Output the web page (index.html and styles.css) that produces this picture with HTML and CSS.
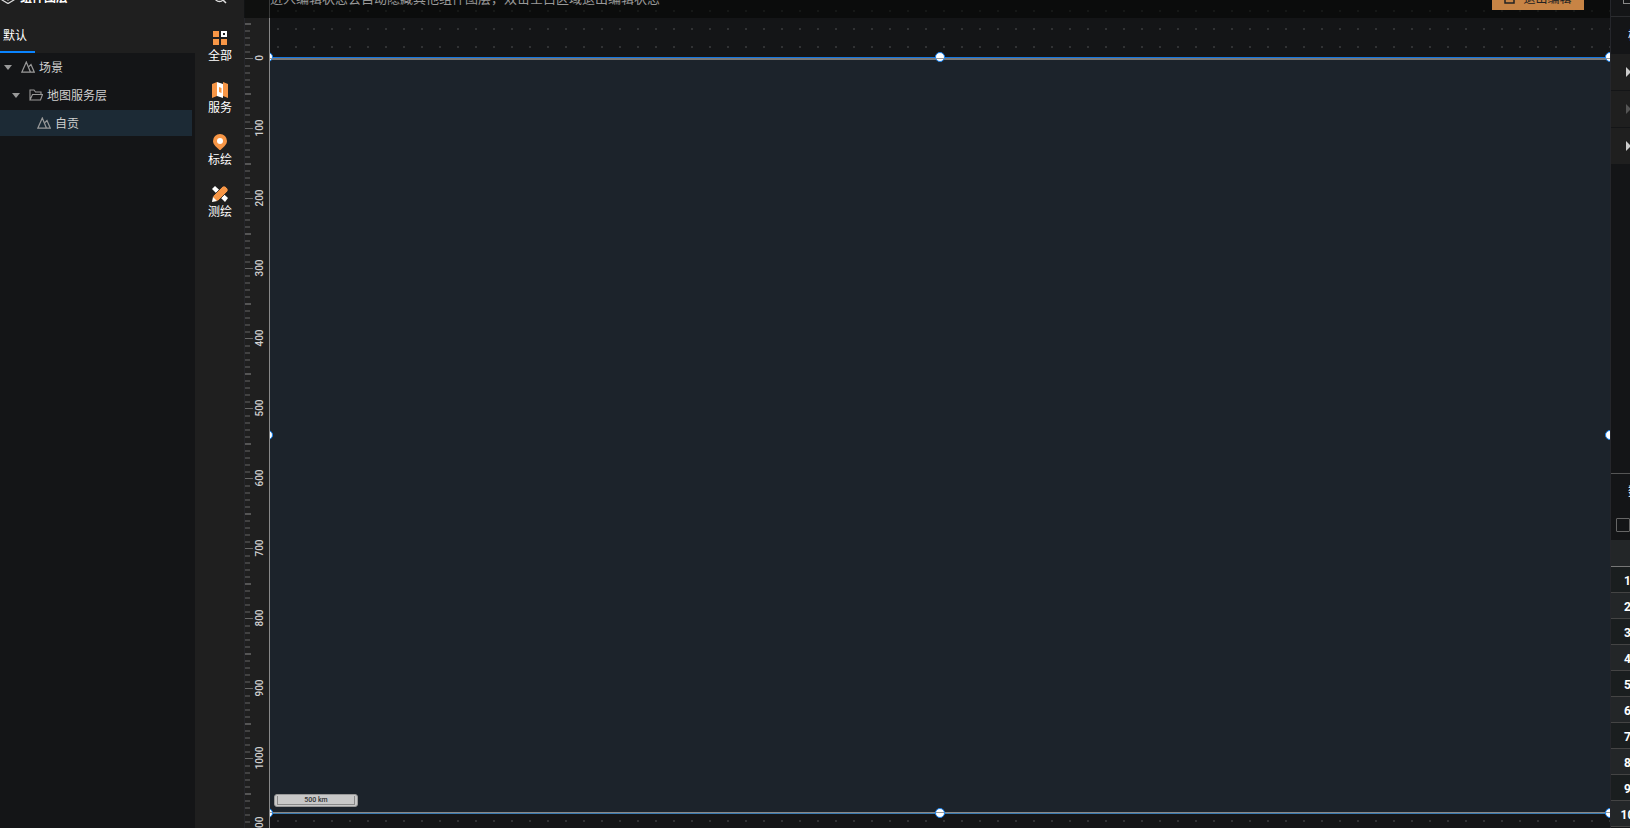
FILE: index.html
```html
<!DOCTYPE html>
<html lang="zh-CN">
<head>
    <meta charset="utf-8">
    <title>组件图层</title>
    <link rel="stylesheet" href="styles.css">
</head>
<body>
    <!-- shared icons -->
    <svg class="sprite" aria-hidden="true">
        <symbol id="icon-scene" viewBox="0 0 14 12">
            <path d="M.8 11.200 5.300 1l4.200 10.200zM8 5.500l2-2 3.300 7.700H9.500" fill="none" stroke="#999" stroke-width="1.200"/>
        </symbol>
        <symbol id="icon-folder" viewBox="0 0 14 12">
            <path d="M1 11V1h4l1.500 2H12v2.500M1 11l2.500-5.500H13.500L11.500 11z" fill="none" stroke="#999" stroke-width="1.100"/>
        </symbol>
    </svg>

    <div class="editor">
        <aside class="layers">
            <header class="layers-header">
                <div class="layers-title">
                    <svg width="14" height="14" viewBox="0 0 14 14"><path d="M1 8v2l6 3.500 6-3.500V8M1 6l6 4 6-4-6-4z" fill="none" stroke="#ddd" stroke-width="1.300"/></svg>
                    <h1>组件图层</h1>
                </div>
                <button type="button" class="tab">默认</button>
            </header>
            <ul class="tree">
                <li class="node"><i class="caret"></i><svg class="node-icon"><use href="#icon-scene"/></svg>场景</li>
                <li class="node level-1"><i class="caret"></i><svg class="node-icon"><use href="#icon-folder"/></svg>地图服务层</li>
                <li class="node level-2 selected"><svg class="node-icon"><use href="#icon-scene"/></svg>自贡</li>
            </ul>
        </aside>

        <nav class="tools">
            <button type="button" class="search" aria-label="搜索">
                <svg width="14" height="14" viewBox="0 0 14 14"><circle cx="6.500" cy="6.500" r="5" fill="none" stroke="#ddd" stroke-width="1.300"/><path d="m10 10 3 3" stroke="#ddd" stroke-width="1.500"/></svg>
            </button>
            <button type="button" class="tool">
                <svg viewBox="0 0 16 16"><path d="M1 1h6v6H1zM1 9h6v6H1zM9 9h6v6H9z" fill="#f79646"/><path d="M10 2h4v4h-4z" fill="none" stroke="#fff" stroke-width="2"/></svg>
                全部
            </button>
            <button type="button" class="tool">
                <svg viewBox="0 0 16 16"><path d="M0 2 5 0v14L0 16zM11 0l5 2v14l-5-2z" fill="#f79646"/><path d="m5 0 6 2v14l-6-2z" fill="#fff"/><path d="m7 5 2.500 1v5L7 10z" fill="#f79646"/></svg>
                服务
            </button>
            <button type="button" class="tool">
                <svg viewBox="0 0 16 16"><path d="M8 0a7 7 0 0 1 7 7c0 4-4.500 7-7 9.500C5.500 14 1 11 1 7a7 7 0 0 1 7-7z" fill="#f79646"/><circle cx="8" cy="7" r="3" fill="#fff"/></svg>
                标绘
            </button>
            <button type="button" class="tool">
                <svg viewBox="0 0 16 16"><path d="m0 3 3-3 13 12-3 4z" fill="#fff"/><path d="M11 0h2l3 3v2L6 15l-6 1 1-6z" fill="#f79646" stroke="#1f1f1f" stroke-width=".8"/><path d="m1 11 4 4-5 1z" fill="#fff"/></svg>
                测绘
            </button>
        </nav>

        <main class="stage">
            <div class="notice">
                <p>进入编辑状态会自动隐藏其他组件图层，双击空白区域退出编辑状态</p>
                <button type="button" class="exit">
                    <svg width="12" height="12" viewBox="0 0 12 12"><path d="M7 1H1v10h9V6M6 6l5-5" fill="none" stroke="#222" stroke-width="1.500"/></svg>
                    退出编辑
                </button>
            </div>
            <div class="ruler" id="ruler"></div>
            <div class="canvas">
                <div class="map">
                    <div class="scale"><span>500 km</span></div>
                    <i class="handle top left"></i>
                    <i class="handle top center"></i>
                    <i class="handle top right"></i>
                    <i class="handle middle left"></i>
                    <i class="handle middle right"></i>
                    <i class="handle bottom left"></i>
                    <i class="handle bottom center"></i>
                    <i class="handle bottom right"></i>
                </div>
            </div>
        </main>

        <aside class="props">
            <div class="props-top"><i class="box"></i></div>
            <h2 class="props-title">样式</h2>
            <div class="group"><i class="arrow"></i></div>
            <div class="group"><i class="arrow dim"></i></div>
            <div class="group"><i class="arrow"></i></div>
            <div class="props-fill"></div>
            <h2 class="data-title">数据</h2>
            <div class="data-check"><input type="checkbox" aria-label="全选"></div>
            <table class="data">
                <thead><tr><th></th></tr></thead>
                <tbody id="rows"></tbody>
            </table>
        </aside>
    </div>

    <script src="script.js"></script>
</body>
</html>
```
FILE: styles.css
```css
* {
    box-sizing: border-box;
}

body {
    margin: 0;
    background-color: #141517;
    color: #d0d0d0;
    font: 12px/16px "Noto Sans CJK SC", sans-serif;
}

button {
    padding: 0;
    border: none;
    background: none;
    color: #fff;
    font: inherit;
    cursor: pointer;
}

.sprite {
    display: none;
}

.editor {
    display: grid;
    grid-template-columns: 195px 49px minmax(0, 1fr) 20px;
    height: 100vh;
    overflow: hidden;
}

/* layer tree */
.layers-header {
    height: 53px;
    background-color: #1f1f1f;
    overflow: hidden;
}

.layers-title {
    display: flex;
    align-items: center;
    gap: 5px;
    height: 16px;
    margin-top: -11px;
    padding-left: 1px;
}

.layers-title h1 {
    margin: 0;
    font-size: 12px;
    font-weight: bold;
    color: #fff;
}

.tab {
    display: block;
    width: 35px;
    height: 34px;
    margin-top: 14px;
    padding-left: 3px;
    border-bottom: 2px solid #0a84ff;
    text-align: left;
}

.tree {
    margin: 0;
    padding: 1px 3px 0 0;
    list-style: none;
}

.node {
    display: flex;
    align-items: center;
    height: 26px;
    margin-bottom: 2px;
    padding-left: 4px;
}

.level-1 {
    padding-left: 12px;
}

.level-2 {
    padding-left: 37px;
}

.selected {
    background-color: #1c2a35;
}

.caret {
    margin-right: 9px;
    border: 4px solid transparent;
    border-top: 5px solid #999;
    border-bottom: none;
}

.node-icon {
    width: 14px;
    height: 12px;
    margin-right: 4px;
}

/* tool bar */
.tools {
    display: flex;
    flex-direction: column;
    align-items: center;
    padding-left: 1px;
    background-color: #1f1f1f;
}

.search {
    height: 14px;
    margin: -10px 0 26px;
}

.search svg {
    display: block;
}

.tool {
    display: flex;
    flex-direction: column;
    align-items: center;
    height: 52px;
}

.tool svg {
    width: 16px;
    height: 16px;
    margin-bottom: 1px;
}

/* stage */
.stage {
    position: relative;
    display: grid;
    grid-template-columns: 26px minmax(0, 1fr);
    height: 100vh;
    overflow: hidden;
}

.notice {
    position: absolute;
    z-index: 2;
    top: 0;
    left: 0;
    right: 0;
    display: flex;
    justify-content: space-between;
    height: 18px;
    padding: 0 26px;
    background-color: rgba(5, 7, 5, 0.6);
    color: #999;
}

.notice p {
    margin: -10px 0 0;
    font-size: 13px;
    white-space: nowrap;
}

.exit {
    display: flex;
    align-items: center;
    justify-content: center;
    gap: 7px;
    width: 92px;
    height: 30px;
    margin-top: -20px;
    padding-top: 6px;
    background-color: #c78445;
    color: #222;
}

.ruler {
    height: 100vh;
    padding-top: 23px;
    background-color: #1f1f1f;
    border-left: 1px solid #25262b;
    border-right: 1px solid #888;
    overflow: hidden;
}

.mark {
    position: relative;
    height: 7px;
}

.mark::before {
    content: "";
    display: block;
    width: 5px;
    height: 2px;
    background-color: #424242;
}

.mark.half::before {
    width: 6px;
    background-color: #555;
}

.mark.full::before {
    width: 8px;
    height: 1px;
    background-color: #666;
}

.mark span {
    position: absolute;
    top: 0;
    left: 9px;
    line-height: 12px;
    font-family: Roboto, sans-serif;
    font-size: 10px;
    font-weight: 500;
    writing-mode: vertical-rl;
    transform: translateY(-50%) rotate(180deg);
}

/* 2px grid dots every 18px */
.canvas {
    padding: 58px 0 15px;
    background: conic-gradient(from 90deg at 16px 2px, #141517 270deg, #313234 0) 9px 10px / 18px 18px;
    overflow: hidden;
}

.map {
    position: relative;
    height: 100%;
    border-top: 2px solid #777;
    border-bottom: 1px solid #888;
    background-color: #1c232b;
    box-shadow: 0 -1px #1677e0, 0 1px #3a7ab0;
}

.scale {
    position: absolute;
    left: 4px;
    bottom: 5px;
    width: 84px;
    height: 13px;
    padding: 1px 2px;
    border: 1px solid #999;
    border-radius: 3px;
    background-color: #c8c8c8;
    color: #333;
    font: 500 7px/9px Roboto, sans-serif;
    text-align: center;
}

.scale span {
    display: block;
    height: 9px;
    border: 1px solid #888;
    border-top: none;
}

.handle {
    position: absolute;
    width: 10px;
    height: 10px;
    border: 1px solid #1684f5;
    border-radius: 50%;
    background-color: #fff;
}

.handle.top {
    top: -8px;
}

.handle.middle {
    top: calc(50% - 6px);
}

.handle.bottom {
    bottom: -6px;
}

.handle.left {
    left: -7px;
}

.handle.center {
    left: calc(50% - 5px);
}

.handle.right {
    right: -5px;
}

/* the frame line stays visible across the handle */
.handle.top::after,
.handle.bottom::after {
    content: "";
    display: block;
    height: 1px;
    margin-top: 5px;
    background-color: #999;
}

.handle.bottom::after {
    margin-top: 3px;
}

/* property panel */
.props {
    display: flex;
    flex-direction: column;
    min-width: 0;
    height: 100vh;
    padding-bottom: 1px;
    border-left: 1px solid #25262b;
    overflow: hidden;
    white-space: nowrap;
}

.props-top {
    height: 17px;
    padding-left: 12px;
    border-bottom: 1px solid #2b2c2f;
}

.box {
    display: block;
    width: 14px;
    height: 14px;
    margin-top: -10px;
    border: 1px solid #888;
}

.props h2 {
    margin: 0;
    padding-left: 17px;
    font-size: 12px;
    font-weight: normal;
    color: #fff;
}

.props-title {
    height: 37px;
    line-height: 36px;
}

.group {
    display: flex;
    align-items: center;
    height: 37px;
    padding-left: 15px;
    border-bottom: 1px solid #141517;
    background-color: #1f1f1f;
}

.arrow {
    border: 5px solid transparent;
    border-left: 5px solid #ccc;
    border-right: none;
}

.arrow.dim {
    border-left-color: #555;
}

.props-fill {
    flex: 1;
    border-bottom: 1px solid #555;
}

.data-title {
    height: 44px;
    line-height: 34px;
}

.data-check {
    height: 22px;
    padding-left: 5px;
}

.data-check input {
    display: block;
    width: 14px;
    height: 14px;
    margin: 0;
    border: 1px solid #666;
    border-radius: 1px;
    appearance: none;
}

.data {
    width: 33px;
    border-collapse: collapse;
    table-layout: fixed;
    color: #fff;
    font: bold 12px/22px Roboto, sans-serif;
    text-align: center;
}

.data th {
    height: 27px;
    padding: 0;
    border-bottom: 1px solid #777;
    background-color: #232628;
}

.data td {
    height: 26px;
    padding: 3px 0 0;
    border-bottom: 1px solid #444;
    background-color: #1a1e1f;
}

.data tr:nth-child(even) td {
    background-color: #232628;
}
```
FILE: script.js
```js
var ruler = document.getElementById('ruler');
for (var v = -50; v <= 1100; v += 10) {
    var mark = document.createElement('div');
    mark.className = 'mark';
    if (v % 100 === 0) {
        mark.classList.add('full');
        mark.innerHTML = '<span>' + v + '</span>';
    } else if (v % 50 === 0) {
        mark.classList.add('half');
    }
    ruler.appendChild(mark);
}

var rows = document.getElementById('rows');
for (var i = 1; i <= 10; i++) {
    rows.innerHTML += '<tr><td>' + i + '</td></tr>';
}
```
